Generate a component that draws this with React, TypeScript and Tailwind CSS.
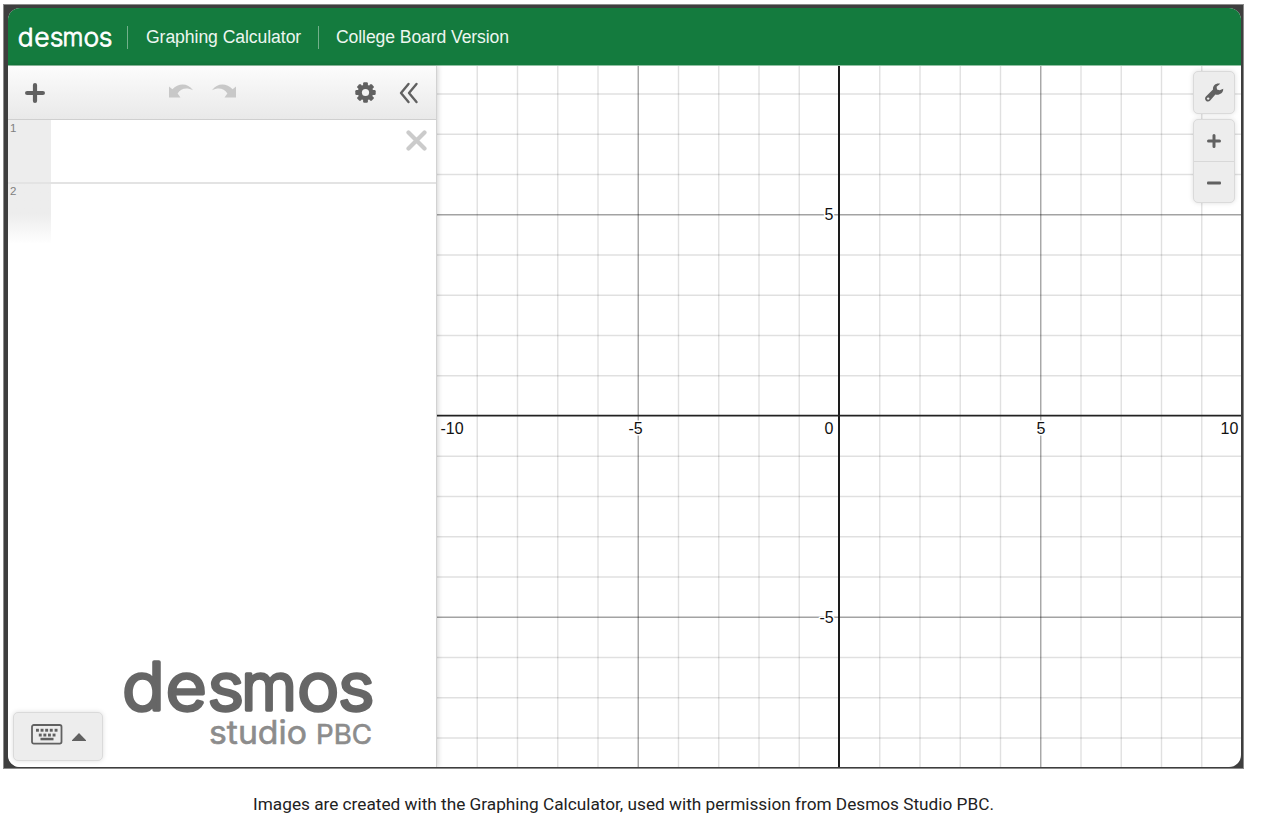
import type { ReactNode } from 'react';

// graph geometry, relative to the graph paper's own box
const UNIT = 40.25;
const ORIGIN = { x: 402, y: 349.7 };
const WIDTH = 804;
const HEIGHT = 702;

const STEPS = Array.from({ length: 19 }, (_, i) => i - 9);

function GraphLabel({ x, y, children }: { x: number; y: number; children: ReactNode }) {
  return (
    <text
      x={x}
      y={y}
      fontSize="16"
      fill="#111"
      stroke="#fff"
      strokeWidth="3"
      strokeLinejoin="round"
      paintOrder="stroke"
    >
      {children}
    </text>
  );
}

function GraphPaper() {
  return (
    <svg width={WIDTH} height={HEIGHT} className="block font-['Liberation_Sans',sans-serif]">
      {STEPS.filter((n) => n !== 0).map((n) => (
        <g key={n} stroke="#000" strokeOpacity={n % 5 === 0 ? 0.36 : 0.12} strokeWidth="1.4">
          <line x1={ORIGIN.x + 0.5 + n * UNIT} x2={ORIGIN.x + 0.5 + n * UNIT} y1="0" y2={HEIGHT} />
          <line x1="0" x2={WIDTH} y1={ORIGIN.y + 0.3 + n * UNIT} y2={ORIGIN.y + 0.3 + n * UNIT} />
        </g>
      ))}
      <line x1={ORIGIN.x} x2={ORIGIN.x} y1="0" y2={HEIGHT} stroke="#111" strokeWidth="1.9" />
      <line x1="0" x2={WIDTH} y1={ORIGIN.y} y2={ORIGIN.y} stroke="#222" strokeWidth="1.8" />
      <GraphLabel x={3.5} y={368.4}>-10</GraphLabel>
      <GraphLabel x={191.5} y={368.4}>-5</GraphLabel>
      <GraphLabel x={387.5} y={368.4}>0</GraphLabel>
      <GraphLabel x={599.5} y={368.4}>5</GraphLabel>
      <GraphLabel x={783.5} y={368.4}>10</GraphLabel>
      <GraphLabel x={387.5} y={153.6}>5</GraphLabel>
      <GraphLabel x={382.5} y={556.6}>-5</GraphLabel>
    </svg>
  );
}

function Wordmark({ className, color, weight }: { className: string; color: string; weight: number }) {
  return (
    <svg viewBox="0 0 250 56" className={className}>
      <g
        fontSize="66"
        fontWeight="300"
        fill={color}
        stroke={color}
        strokeWidth={weight}
        strokeLinejoin="round"
        transform="scale(1.07 1)"
        className="font-['Inter',sans-serif]"
      >
        <text x="-0.8 40 79" y="50.5">des</text>
        <text x="110.5" y="50.5" textLength="52" lengthAdjust="spacingAndGlyphs">m</text>
        <text x="162.8 201" y="50.5">os</text>
      </g>
    </svg>
  );
}

function UndoIcon({ className = '' }: { className?: string }) {
  return (
    <svg width="24" height="14" viewBox="0 0 24 14" className={className}>
      <path d="M0 2.5 3.4 5.2C9-1.2 19-1.6 24 6.3 18 3.2 12 4 8.6 9.4L11.5 13.5H0Z" fill="#c8c8c8" />
    </svg>
  );
}

function GearIcon() {
  return (
    <svg width="21" height="21" viewBox="-10.5 -10.5 21 21" fill="#616161">
      {[0, 45, 90, 135].map((a) => (
        <rect key={a} x="-2.4" y="-10.2" width="4.8" height="20.4" rx="1.2" transform={`rotate(${a})`} />
      ))}
      <circle r="7.8" />
      <circle r="3.6" fill="#f3f3f3" />
    </svg>
  );
}

function PlusIcon({ size, weight }: { size: number; weight: number }) {
  return (
    <svg width={size} height={size} viewBox={`0 0 ${size} ${size}`} stroke="#616161" strokeWidth={weight} strokeLinecap="round">
      <path d={`M${size / 2} ${weight / 2}V${size - weight / 2}M${weight / 2} ${size / 2}H${size - weight / 2}`} />
    </svg>
  );
}

function WrenchIcon() {
  return (
    <svg width="19" height="19" viewBox="0 0 19 19">
      <path
        d="M15.2.7C11.2-.4 7.5 2.3 8 6.6L.9 13.4C-.4 14.8-.1 16.7 1 17.7 2.2 18.9 4 18.8 5.2 17.5L10.4 11.5C14.5 12.5 18.5 9.9 18.2 5.8L14.7 7.2 12 6.5 11.6 3.8Z"
        fill="#616161"
      />
      <circle cx="3.2" cy="15.6" r="1.2" fill="#ededed" />
    </svg>
  );
}

function KeyboardIcon() {
  return (
    <svg width="32" height="21" viewBox="0 0 32 21" fill="#616161">
      <rect x="1" y="1" width="29.5" height="18.6" rx="1.8" fill="none" stroke="#616161" strokeWidth="1.8" />
      {[5, 9.6, 14.2, 18.8, 23.6].map((x) => (
        <rect key={x} x={x} y="4.8" width="2.9" height="2.9" />
      ))}
      {[7.8, 12.4, 17, 21.6].map((x) => (
        <rect key={x} x={x} y="9.6" width="2.9" height="2.9" />
      ))}
      <rect x="9.5" y="13.8" width="13" height="2.5" />
    </svg>
  );
}

function Header() {
  return (
    <header className="flex h-[57px] shrink-0 items-center bg-[#147b3e] pt-px pl-[10px] text-[17.6px] text-[#edf6f0] font-['Liberation_Sans',sans-serif]">
      <Wordmark className="h-[21px] w-[94px] overflow-visible" color="#fff" weight={2} />
      <div className="ml-[15px] h-[23px] w-px bg-[#73b08b]" />
      <span className="ml-[18px] w-[156px] pt-px tracking-[-0.07px] whitespace-nowrap">Graphing Calculator</span>
      <div className="ml-[16px] h-[23px] w-px bg-[#73b08b]" />
      <span className="ml-[17px] pt-px tracking-[-0.1px] whitespace-nowrap">College Board Version</span>
    </header>
  );
}

function ExpressionPanel() {
  return (
    <aside className="relative z-10 flex w-[429px] shrink-0 flex-col border-r border-[#d2d2d2] bg-white shadow-[1px_0_5px_rgba(0,0,0,0.18)] font-['Liberation_Sans',sans-serif]">
      {/* toolbar */}
      <div className="flex h-[54px] shrink-0 items-center border-b border-[#cfcfcf] bg-linear-to-b from-[#fcfcfc] to-[#e9e9e9] pl-[17px]">
        <PlusIcon size={20} weight={4.2} />
        <UndoIcon className="mb-[3px] ml-[124px]" />
        <UndoIcon className="mb-[3px] ml-[19px] -scale-x-100" />
        <div className="ml-[119px] flex">
          <GearIcon />
        </div>
        <svg width="20" height="22" viewBox="0 0 20 22" className="ml-[23px]" fill="none" stroke="#616161" strokeWidth="2.4" strokeLinecap="round" strokeLinejoin="round">
          <path d="M9.5 2 2 11l7.5 9M17.5 2 10 11l7.5 9" />
        </svg>
      </div>

      {/* expression rows */}
      <div className="flex h-[64px] shrink-0 border-b-2 border-[#e3e3e3]">
        <div className="w-[43px] bg-[#ededed] pt-[2px] pl-[2px] text-[11.5px] leading-[13px] text-[#808080]">1</div>
        <div className="flex flex-1 justify-end pt-[10px] pr-[9px]">
          <svg width="21" height="21" viewBox="0 0 21 21" stroke="#cbcbcb" strokeWidth="4.2" strokeLinecap="round">
            <path d="m2.5 2.5 16 16m0-16-16 16" />
          </svg>
        </div>
      </div>
      <div className="h-[60px] w-[43px] bg-linear-to-b from-[#ededed] from-50% to-white pt-px pl-[2px] text-[11.5px] leading-[13px] text-[#808080]">
        2
      </div>

      {/* branding */}
      <div className="mt-auto mr-[63px] mb-[17px] flex flex-col items-end">
        <Wordmark className="h-[56px] w-[250px] overflow-visible" color="#666" weight={3.6} />
        <svg width="166" height="35" viewBox="0 -1 166 35" fill="#8c8c8c" stroke="#8c8c8c" strokeWidth="0.6" className="overflow-visible font-['Inter',sans-serif]">
          <text x="2" y="27.5" fontSize="33" textLength="98" lengthAdjust="spacingAndGlyphs">studio</text>
          <text x="109" y="27.5" fontSize="27" textLength="56" lengthAdjust="spacingAndGlyphs">PBC</text>
        </svg>
      </div>

      <button className="absolute bottom-[6px] left-[5px] flex h-[49px] w-[90px] items-center rounded-[5px] border border-[#dadada] bg-[#ededed] pb-[4px] pl-[17px] shadow-[0_0_5px_rgba(0,0,0,0.13)]">
        <KeyboardIcon />
        <svg width="14" height="8" viewBox="0 0 14 8" className="mt-[4px] ml-[9px]">
          <path d="M7 0 14 7.2V8H0V7.2Z" fill="#616161" />
        </svg>
      </button>
    </aside>
  );
}

export default function App() {
  return (
    <div className="flex h-[818px] w-[1263px] flex-col overflow-hidden bg-white pt-1 pl-[3px]">
      <div className="h-[765px] w-[1241px] shrink-0 border border-[#8b8b8b] bg-[#3e3e3e] pt-[3px] pr-[2px] pb-px pl-1">
        <div className="flex h-full flex-col overflow-hidden rounded-[12px] bg-white">
          <Header />
          <main className="flex min-h-0 flex-1 border-t border-[#91c1a3]">
            <ExpressionPanel />
            <section className="relative min-w-0 flex-1 overflow-hidden">
              <GraphPaper />
              <div className="absolute top-[5px] right-[6px] flex flex-col gap-[5px]">
                <button className="flex h-[43px] w-[42px] items-center justify-center rounded-[5px] border border-[#dadada] bg-[#ededed] pb-px shadow-[0_0_5px_rgba(0,0,0,0.13)]">
                  <WrenchIcon />
                </button>
                <div className="flex h-[84px] w-[42px] flex-col rounded-[5px] border border-[#dadada] bg-[#ededed] shadow-[0_0_5px_rgba(0,0,0,0.13)]">
                  <button className="flex flex-1 items-center justify-center border-b border-[#d8d8d8] pt-[2px]">
                    <PlusIcon size={14} weight={3} />
                  </button>
                  <button className="flex flex-1 items-center justify-center pt-[2px]">
                    <svg width="14" height="4" viewBox="0 0 14 4">
                      <rect y=".5" width="14" height="3" rx="1" fill="#616161" />
                    </svg>
                  </button>
                </div>
              </div>
            </section>
          </main>
        </div>
      </div>
      <p className="mt-[23px] w-[1241px] text-center text-[17.23px] leading-6 text-[#222] font-['Roboto',sans-serif]">
        Images are created with the Graphing Calculator, used with permission from Desmos Studio PBC.
      </p>
    </div>
  );
}
